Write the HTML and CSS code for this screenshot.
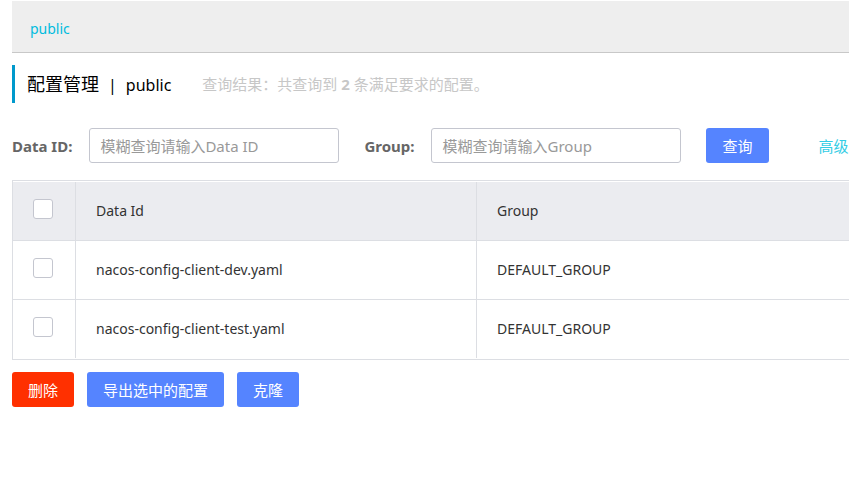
FILE: index.html
```html
<!DOCTYPE html>
<html lang="zh-CN">
<head>
<meta charset="utf-8">
<title>配置管理</title>
<link rel="stylesheet" href="styles.css">
</head>
<body>
<main class="page">
  <nav class="namespaces"><a class="namespace" href="#">public</a></nav>
  <header class="heading">
    <h1 class="title"><span class="title-main">配置管理</span><span>|</span><span>public</span></h1>
    <p class="summary">查询结果：共查询到 <strong>2</strong> 条满足要求的配置。</p>
  </header>
  <form class="search">
    <label class="label" for="data-id">Data ID:</label>
    <input class="field" id="data-id" type="text" placeholder="模糊查询请输入Data ID">
    <label class="label" for="group">Group:</label>
    <input class="field" id="group" type="text" placeholder="模糊查询请输入Group">
    <button class="button" type="button">查询</button>
    <a class="advanced" href="#">高级</a>
  </form>
  <div class="table-frame">
    <table class="table">
      <colgroup><col class="col-check"><col class="col-id"><col></colgroup>
      <thead>
        <tr><th><input class="check" type="checkbox" aria-label="全选"></th><th>Data Id</th><th>Group</th></tr>
      </thead>
      <tbody>
        <tr><td><input class="check" type="checkbox" aria-label="nacos-config-client-dev.yaml"></td><td>nacos-config-client-dev.yaml</td><td>DEFAULT_GROUP</td></tr>
        <tr><td><input class="check" type="checkbox" aria-label="nacos-config-client-test.yaml"></td><td>nacos-config-client-test.yaml</td><td>DEFAULT_GROUP</td></tr>
      </tbody>
    </table>
  </div>
  <div class="actions">
    <button class="button danger" type="button">删除</button>
    <button class="button" type="button">导出选中的配置</button>
    <button class="button" type="button">克隆</button>
  </div>
</main>
</body>
</html>
```
FILE: styles.css
```css
* { box-sizing: border-box; }
body {
  margin: 0;
  background: #fff;
  color: #333;
  font-family: "Noto Sans", "Noto Sans CJK SC", sans-serif;
  font-size: 14px;
  line-height: 20px;
}
a { text-decoration: none; }
button, input { font: inherit; }
.page { padding: 1px 0 0 12px; overflow: hidden; }
.namespaces {
  padding: 18px 18px 13px;
  background: #eee;
  border-bottom: 1px solid #c8c8c8;
}
.namespace { color: #00bcde; }
.heading {
  display: flex;
  align-items: center;
  gap: 31px;
  height: 38px;
  margin-top: 12px;
  padding-left: 12px;
  border-left: 3px solid #09c;
}
.title {
  display: flex;
  align-items: baseline;
  gap: 9px;
  margin: 0;
  color: #000;
  font-size: 16px;
  font-weight: 400;
}
.title-main { font-size: 18px; }
.summary { margin: 0; color: #c7c7c7; font-size: 15px; }
.search {
  display: flex;
  align-items: center;
  margin-top: 25px;
  font-size: 15px;
  white-space: nowrap;
}
.label { flex: none; margin-right: 17px; color: #666; font-weight: 700; }
.field {
  flex: none;
  width: 250px;
  height: 35px;
  margin-right: 25px;
  padding: 0 10px;
  border: 1px solid #c4c6cf;
  border-radius: 3px;
  background: #fff;
  color: #333;
}
.field::placeholder { color: #999; opacity: 1; }
.button {
  flex: none;
  height: 35px;
  padding: 0 16px;
  border: 0;
  border-radius: 3px;
  background: #5584ff;
  color: #fff;
  font-size: 15px;
}
.danger { background: #ff3000; }
.advanced { margin-left: 50px; color: #33cde5; }
.table-frame {
  margin-top: 17px;
  padding: 1px 0;
  border: 1px solid #dcdee3;
  border-right: 0;
}
.table {
  width: 100%;
  table-layout: fixed;
  border-collapse: separate;
  border-spacing: 0;
}
.col-check { width: 63px; }
.col-id { width: 401px; }
.table th, .table td {
  height: 59px;
  padding: 0 20px;
  border-right: 1px solid #dcdee3;
  border-bottom: 1px solid #dcdee3;
  font-weight: 400;
  text-align: left;
}
.table th { background: #ebecf0; }
.table tbody tr:last-child td { height: 58px; border-bottom: 0; }
.table th:last-child, .table td:last-child { border-right: 0; }
.check {
  display: block;
  appearance: none;
  width: 20px;
  height: 20px;
  margin: 0 0 5px;
  border: 1px solid #c4c6cf;
  border-radius: 3px;
  background: #fff;
}
.check:checked { background: #5584ff; }
.actions { display: flex; gap: 13px; margin-top: 12px; }
```
